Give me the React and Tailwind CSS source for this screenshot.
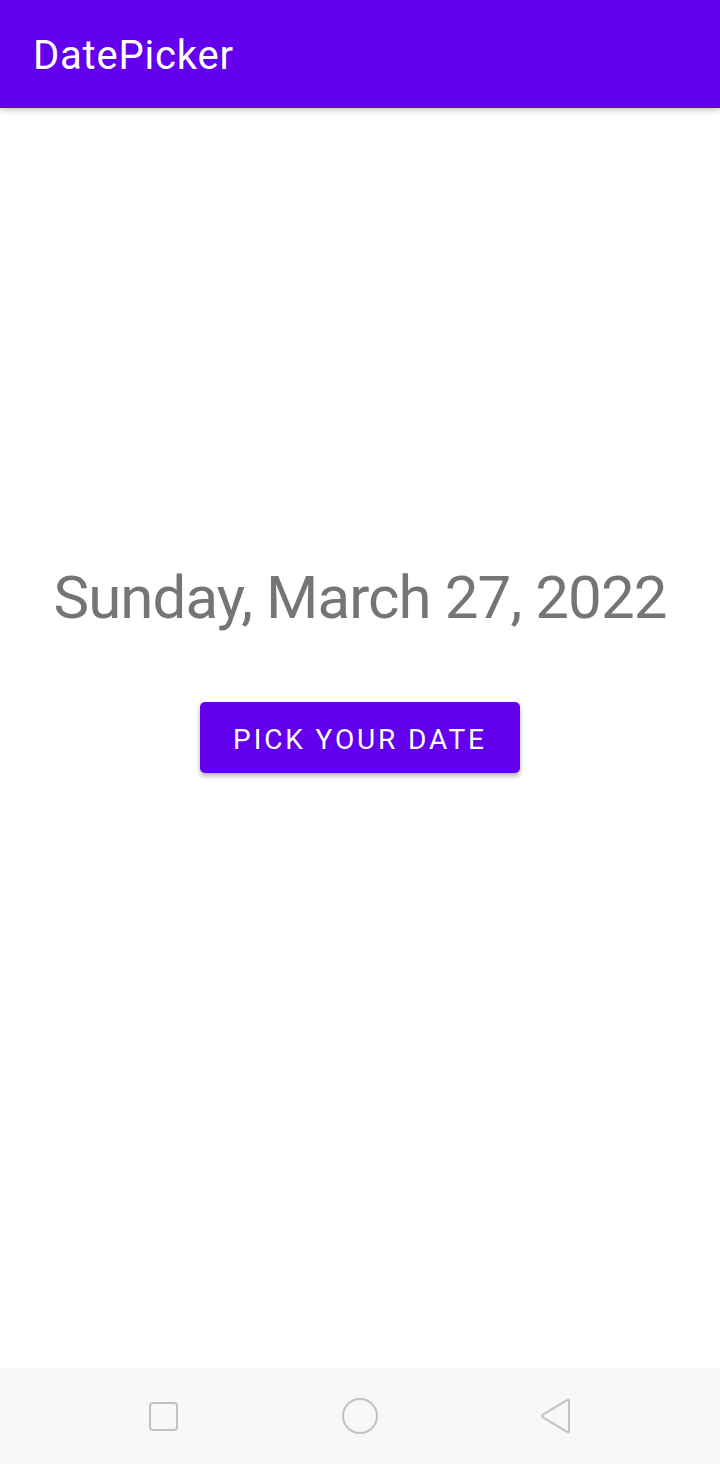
import React from "react";

function NavBar() {
  return (
    <div className="h-[96px] bg-[#f8f8f8] flex items-center">
      <div className="flex items-center h-full">
        <div className="w-[149px]" />
        <div className="w-[29px] h-[29px] rounded-[4px] border-2 border-[#c2c2c2]" />
        <div className="w-[164px]" />
        <div className="w-[36px] h-[36px] rounded-full border-2 border-[#c2c2c2]" />
        <div className="w-[162px]" />
        <svg width="32" height="36" viewBox="0 0 32 36" fill="none">
          <path
            d="M29 2.5 L29 33.5 Q29 35 27.6 34.2 L2.8 19.4 Q1.2 18 2.8 16.6 L27.6 1.8 Q29 1 29 2.5 Z"
            stroke="#c2c2c2"
            strokeWidth="2"
            strokeLinejoin="round"
          />
        </svg>
      </div>
    </div>
  );
}

export default function App() {
  const [date] = React.useState("Sunday, March 27, 2022");

  return (
    <div className="h-[1464px] flex flex-col bg-white font-['Roboto',sans-serif]">
      <header className="h-[108px] bg-[#6200ee] flex items-center pl-[33px] pt-[4px] shadow-[0_2px_6px_rgba(0,0,0,0.25)] relative z-10">
        <h1 className="text-white text-[40px] leading-none tracking-[0.8px]">DatePicker</h1>
      </header>

      <main className="flex-1 flex flex-col items-center pt-[455px]">
        <p className="text-[#757575] text-[60px] leading-[70px] tracking-[-0.9px]">{date}</p>
        <button className="mt-[69px] w-[320px] h-[71px] pt-[4px] bg-[#6200ee] rounded-[5px] text-white text-[28px] tracking-[2.9px] uppercase shadow-[0_3px_5px_rgba(0,0,0,0.3)]">
          Pick your date
        </button>
      </main>

      <NavBar />
    </div>
  );
}
